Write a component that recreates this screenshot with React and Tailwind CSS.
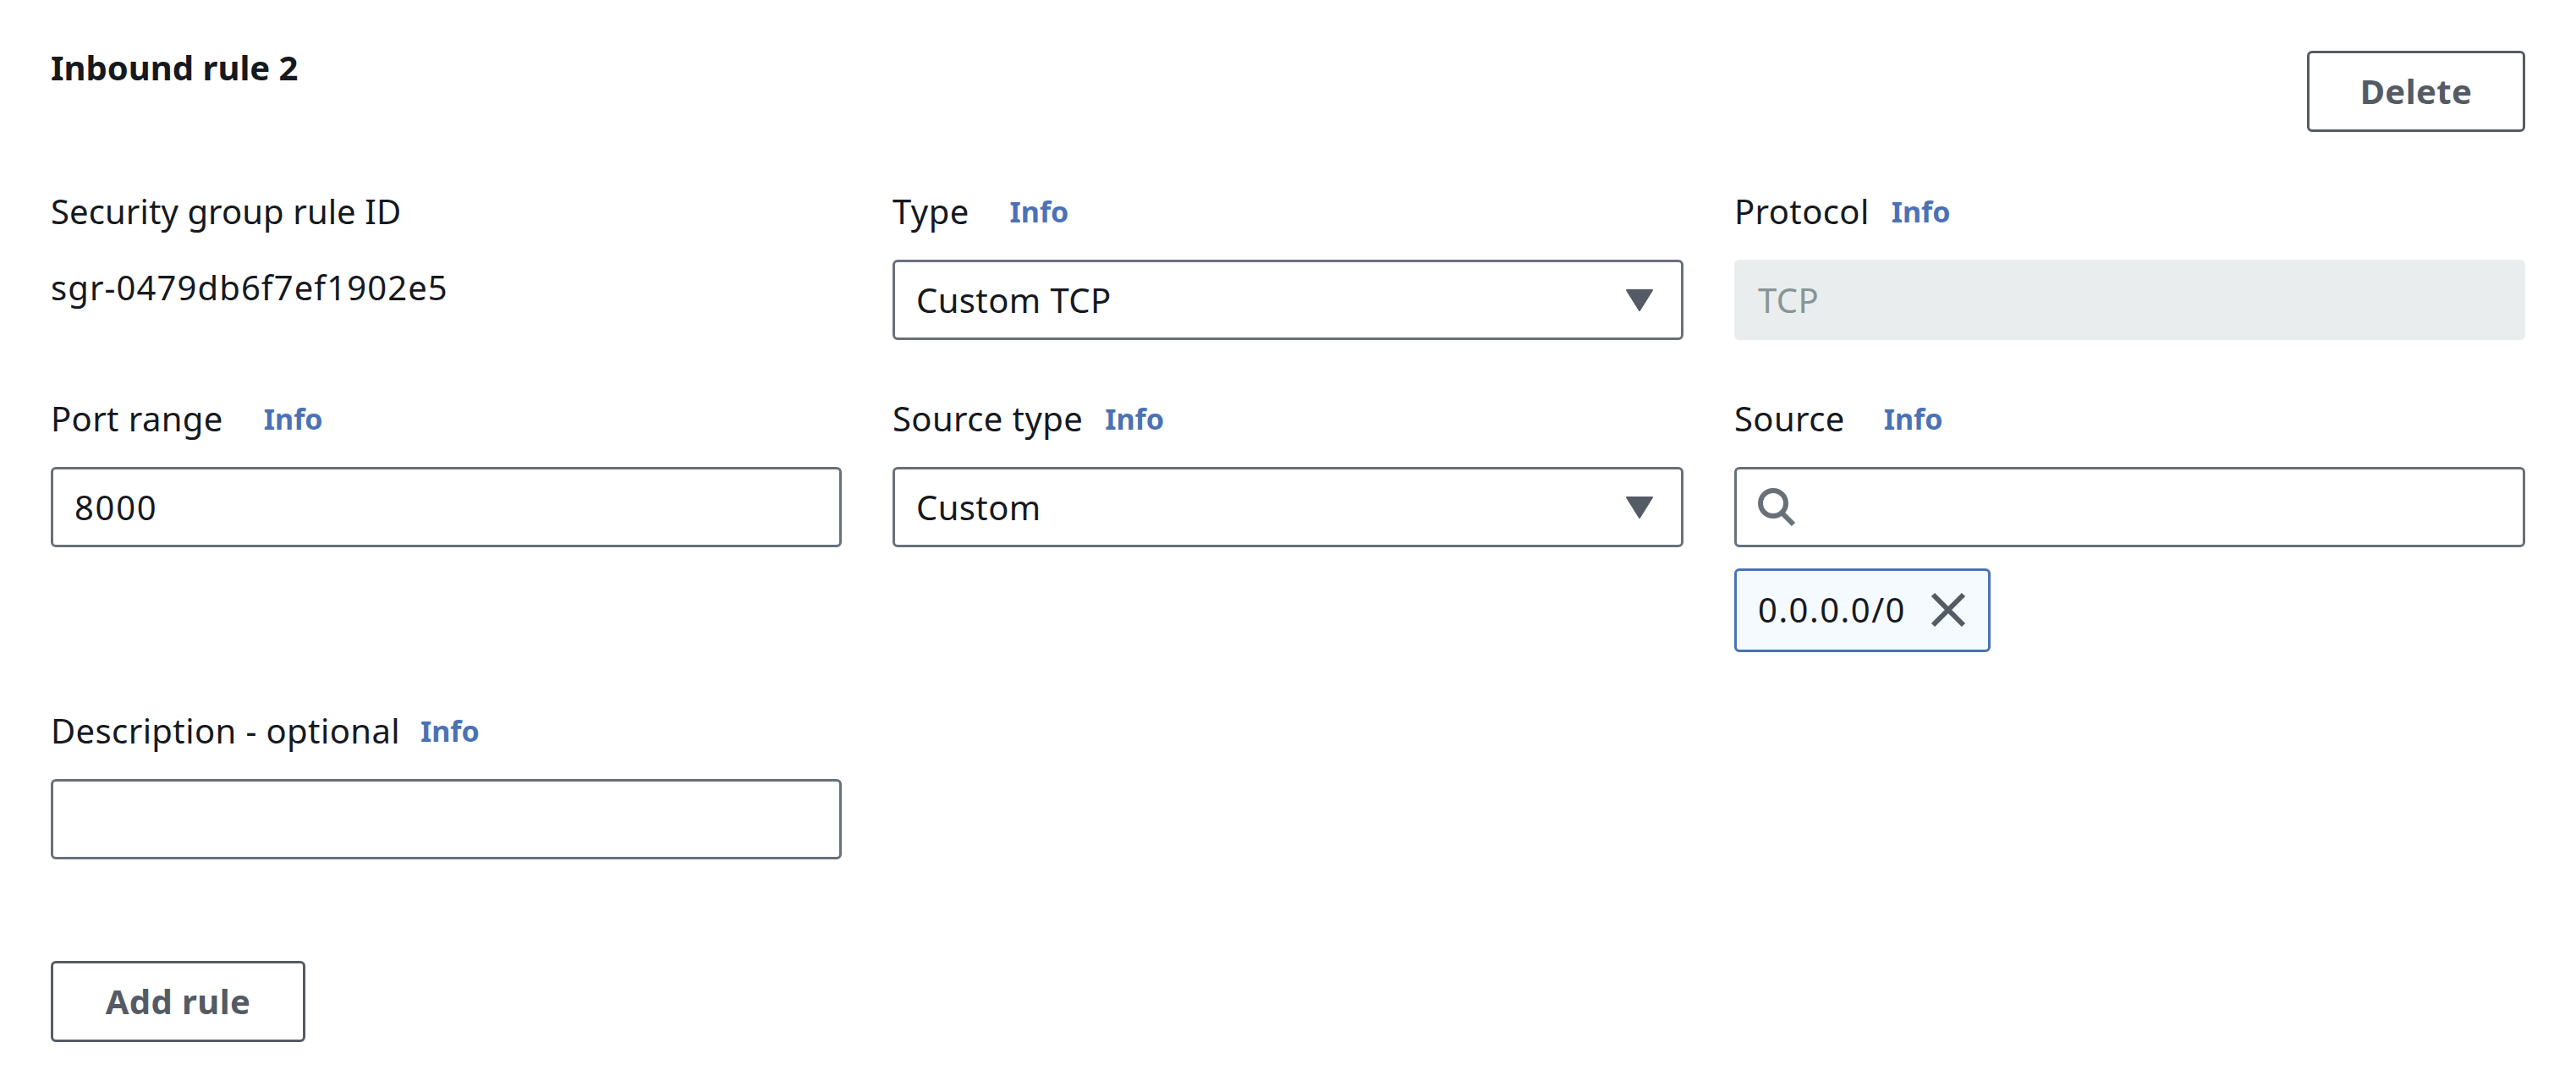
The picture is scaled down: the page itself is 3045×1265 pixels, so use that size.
import React from "react";

function Label({ text, infoClass, trackClass = "tracking-[0.4px]" }) {
  return (
    <div className="flex items-center h-[50px] mb-[32px]">
      <span className={"text-[40px] leading-[50px] text-[#16191f] " + trackClass}>{text}</span>
      <a className={"text-[34px] leading-[50px] font-bold text-[#4a72b5] " + infoClass}>Info</a>
    </div>
  );
}

function Select({ value }) {
  return (
    <div className="h-[95px] border-[3px] border-[#687078] rounded-[6px] flex items-center justify-between pl-[25px] pr-[33px]">
      <span className="text-[40px] tracking-[0.4px] text-[#16191f]">{value}</span>
      <svg width="32" height="26" viewBox="0 0 32 26">
        <path d="M1 1h30L16 25z" fill="#545b64" stroke="#545b64" strokeWidth="2" strokeLinejoin="round" />
      </svg>
    </div>
  );
}

function Button({ children, className }) {
  return (
    <button className={"h-[96px] border-[3px] border-[#545b64] rounded-[6px] text-[40px] font-bold tracking-[0.4px] text-[#545b64] " + className}>
      {children}
    </button>
  );
}

export default function App() {
  return (
    <div className="min-h-screen bg-white px-[60px] pt-[60px] font-['Noto_Sans',sans-serif]">
      {/* Header */}
      <div className="flex justify-between items-start">
        <h2 className="text-[40px] leading-[40px] font-bold text-[#16191f]">Inbound rule 2</h2>
        <Button className="w-[258px]">Delete</Button>
      </div>

      <div className="grid grid-cols-3 gap-x-[60px] gap-y-[68px] mt-[69px]">
        <div>
          <Label text="Security group rule ID" infoClass="hidden" trackClass="tracking-[0.1px]" />
          <div className="text-[40px] leading-[50px] tracking-[1.1px] mt-[40px] text-[#16191f]">sgr-0479db6f7ef1902e5</div>
        </div>
        <div>
          <Label text="Type" infoClass="ml-[48px]" />
          <Select value="Custom TCP" />
        </div>
        <div>
          <Label text="Protocol" infoClass="ml-[26px]" />
          <div className="h-[95px] bg-[#eaeded] rounded-[6px] flex items-center pl-[28px] text-[40px] tracking-[0.4px] text-[#879596]">TCP</div>
        </div>

        <div>
          <Label text="Port range" infoClass="ml-[48px]" />
          <div className="h-[95px] border-[3px] border-[#687078] rounded-[6px] flex items-center pl-[25px] text-[40px] tracking-[1.7px] text-[#16191f]">8000</div>
        </div>
        <div>
          <Label text="Source type" infoClass="ml-[26px]" />
          <Select value="Custom" />
        </div>
        <div>
          <Label text="Source" infoClass="ml-[46px]" />
          <div className="h-[95px] border-[3px] border-[#687078] rounded-[6px] flex items-center pl-[25px]">
            <svg width="46" height="46" viewBox="0 0 46 46" fill="none" stroke="#687078" strokeWidth="6">
              <circle cx="18" cy="18" r="15" />
              <path d="M28 29l14 14" />
            </svg>
          </div>
          <div className="mt-[25px] w-[303px] h-[99px] border-[3px] border-[#4a72b5] bg-[#f5faff] rounded-[6px] flex items-center pl-[25px] pb-[2px]">
            <span className="text-[40px] tracking-[1.5px] text-[#16191f]">0.0.0.0/0</span>
            <svg className="ml-[29px]" width="42" height="42" viewBox="0 0 42 42" stroke="#545b64" strokeWidth="6">
              <path d="M3 3l36 36M39 3L3 39" />
            </svg>
          </div>
        </div>

        <div>
          <Label text="Description - optional" infoClass="ml-[24px]" />
          <div className="h-[95px] border-[3px] border-[#687078] rounded-[6px]" />
        </div>
      </div>

      <Button className="w-[301px] mt-[120px]">Add rule</Button>
    </div>
  );
}
